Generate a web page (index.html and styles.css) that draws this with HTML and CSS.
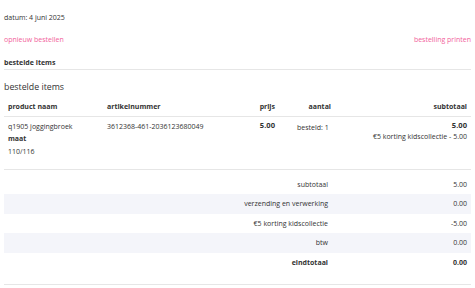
FILE: index.html
```html
<!DOCTYPE html>
<html lang="nl">
<head>
<meta charset="utf-8">
<title>bestelling</title>
<link rel="stylesheet" href="styles.css">
</head>
<body>
<div class="page">
  <p class="date">datum: 4 juni 2025</p>
  <div class="actions">
    <a class="link" href="#">opnieuw bestellen</a>
    <a class="link" href="#">bestelling printen</a>
  </div>
  <div class="tab">bestelde items</div>
  <h2 class="title">bestelde items</h2>
  <table class="items">
    <colgroup>
      <col class="c-name"><col class="c-sku"><col class="c-price"><col class="c-qty"><col class="c-sub">
    </colgroup>
    <thead>
      <tr>
        <th class="l">product naam</th>
        <th class="l">artikelnummer</th>
        <th class="r">prijs</th>
        <th class="r">aantal</th>
        <th class="r">subtotaal</th>
      </tr>
    </thead>
    <tbody>
      <tr class="item">
        <td class="l">
          <div>q1905 joggingbroek</div>
          <div class="opt-label">maat</div>
          <div>110/116</div>
        </td>
        <td class="l">3612368-461-2036123680049</td>
        <td class="r money"><strong class="price">5.00</strong></td>
        <td class="l qty">besteld: 1</td>
        <td class="r money">
          <strong class="price">5.00</strong>
          <div class="disc">€5 korting kidscollectie - 5.00</div>
        </td>
      </tr>
    </tbody>
  </table>
  <table class="totals">
    <colgroup>
      <col class="t-space"><col class="t-label"><col class="t-val">
    </colgroup>
    <tbody>
      <tr><td></td><td class="r">subtotaal</td><td class="r">5.00</td></tr>
      <tr class="odd"><td></td><td class="r">verzending en verwerking</td><td class="r">0.00</td></tr>
      <tr><td></td><td class="r">€5 korting kidscollectie</td><td class="r">-5.00</td></tr>
      <tr class="odd"><td></td><td class="r">btw</td><td class="r">0.00</td></tr>
      <tr class="grand"><td></td><td class="r">eindtotaal</td><td class="r">0.00</td></tr>
    </tbody>
  </table>
</div>
</body>
</html>
```

FILE: styles.css
```css
* { box-sizing: border-box; }
html, body { margin: 0; padding: 0; background: #fff; }
body {
  font-family: "Open Sans", "Liberation Sans", sans-serif;
  font-size: 7px;
  color: #333;
}
.page { padding: 12px 4px 0 4px; }
.date { margin: 0; line-height: 12px; }
.actions {
  display: flex;
  justify-content: space-between;
  margin-top: 10px;
  line-height: 12px;
}
.link { color: #f25f9c; text-decoration: none; }
.tab {
  margin-top: 11px;
  font-weight: 700;
  line-height: 12px;
  border-bottom: 1px solid #e6e6e6;
}
.title {
  margin: 10px 0 0 0;
  font-size: 8.8px;
  font-weight: 400;
  line-height: 14px;
}
table { width: 100%; border-collapse: collapse; }
.items { margin-top: 3px; }
.c-name { width: 99px; }
.c-sku { width: 130px; }
.c-price { width: 46px; }
.c-qty { width: 56px; }
.items th {
  font-weight: 700;
  line-height: 12px;
  padding: 4px 4px 3px 4px;
  border-bottom: 1px solid #e6e6e6;
  white-space: nowrap;
}
.items td {
  vertical-align: top;
  line-height: 12.5px;
  padding: 3.5px 4px 10.5px 4px;
  border-bottom: 1px solid #e6e6e6;
  white-space: nowrap;
}
.items td.money { padding-top: 1.5px; }
.l { text-align: left; }
.r { text-align: right; }
.opt-label { font-weight: 700; }
.price { font-size: 7.6px; font-weight: 700; }
.items .qty { padding-left: 18px; padding-top: 4.5px; }
.disc { line-height: 9px; }
.totals { margin-top: 5px; border-bottom: 1px solid #e6e6e6; }
.t-space { width: 229px; }
.t-label { width: 99px; }
.totals td { padding: 0 4px; height: 19.5px; vertical-align: middle; white-space: nowrap; }
.totals tr.odd td { background: #f4f5fa; }
.totals tr.grand td { font-weight: 700; height: 31.5px; padding-bottom: 12px; }
```
